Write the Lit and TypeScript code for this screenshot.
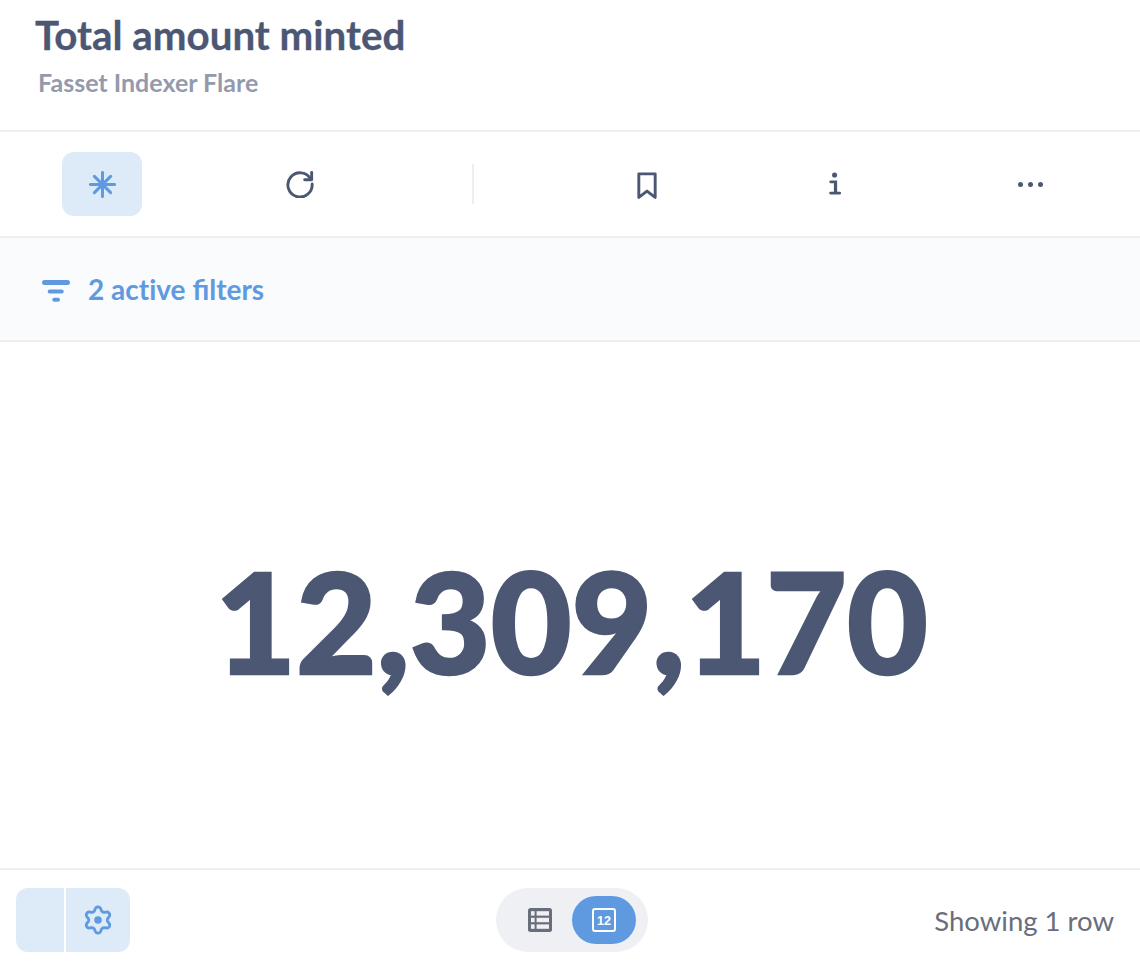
import { LitElement, html, css, svg } from "lit";
import { customElement } from "lit/decorators.js";

function cogPath(): string {
  const points: string[] = [];
  for (let i = 0; i < 72; i++) {
    const t = (i / 72) * Math.PI * 2;
    const wave = Math.cos(6 * t);
    const flattened = Math.sign(wave) * Math.pow(Math.abs(wave), 0.65);
    const r = 11.2 + 1.9 * flattened;
    points.push(`${(15 + r * Math.sin(t)).toFixed(2)} ${(15 - r * Math.cos(t)).toFixed(2)}`);
  }
  return `M${points.join("L")}Z`;
}

@customElement("app-root")
export class AppRoot extends LitElement {
  static styles = css`
    :host {
      display: flex;
      flex-direction: column;
      width: 1140px;
      height: 962px;
      background: #fff;
      color: #4c5773;
      font-family: Lato, sans-serif;
      overflow: hidden;
    }
    .header {
      height: 130px;
      box-sizing: border-box;
      padding: 12px 35px 0;
    }
    .title {
      font-size: 40.3px;
      font-weight: 700;
      line-height: 46px;
      -webkit-text-stroke: 0.3px currentColor;
    }
    .subtitle {
      font-size: 25px;
      font-weight: 700;
      line-height: 30px;
      color: #949aab;
      margin: 9px 0 0 3px;
    }
    .toolbar {
      height: 104px;
      border-top: 2px solid #eeeeef;
      border-bottom: 2px solid #eeeeef;
      display: flex;
      align-items: center;
      padding-left: 62px;
    }
    .btn {
      width: 80px;
      height: 64px;
      border-radius: 12px;
      display: flex;
      align-items: center;
      justify-content: center;
      flex: none;
    }
    .btn.active {
      background: #ddeaf7;
      color: #5f9ae0;
    }
    .refresh { margin-left: 118px; }
    .sep {
      width: 2px;
      height: 40px;
      background: #eeeeef;
      margin-left: 132px;
      flex: none;
    }
    .bookmark { margin-left: 133px; padding-top: 4px; box-sizing: border-box; }
    .info { margin-left: 108px; }
    .more { margin-left: 115px; }
    .filters {
      height: 104px;
      box-sizing: border-box;
      background: #f9fbfc;
      border-bottom: 2px solid #eeeeef;
      display: flex;
      align-items: center;
      gap: 18px;
      padding: 0 0 0 42px;
      color: #5f9ae0;
      font-size: 28px;
      font-weight: 700;
    }
    .filters svg { margin-top: 3px; }
    .noliga { font-variant-ligatures: none; }
    .main {
      flex: 1;
      display: flex;
      align-items: center;
      justify-content: center;
      padding: 32px 0 0 3px;
      box-sizing: border-box;
      font-size: 139.4px;
      font-weight: 900;
      line-height: 1;
      -webkit-text-stroke: 2.5px currentColor;
    }
    .footer {
      height: 94px;
      box-sizing: border-box;
      border-top: 2px solid #eeeeef;
      display: flex;
      align-items: center;
      padding: 8px 26px 0 16px;
    }
    .split {
      display: flex;
      gap: 2px;
      width: 114px;
      height: 64px;
      flex: none;
    }
    .split div {
      background: #ddeaf7;
      color: #5f9ae0;
      display: flex;
      align-items: center;
      justify-content: center;
    }
    .split .l { width: 48px; border-radius: 12px 0 0 12px; }
    .split .r { width: 64px; border-radius: 0 12px 12px 0; }
    .toggle {
      width: 152px;
      height: 64px;
      border-radius: 32px;
      background: #eef0f4;
      box-sizing: border-box;
      padding: 8px 12px;
      display: flex;
      justify-content: space-between;
      margin-left: 366px;
      flex: none;
    }
    .toggle div {
      width: 64px;
      height: 48px;
      border-radius: 24px;
      display: flex;
      align-items: center;
      justify-content: center;
      color: #696e7b;
    }
    .toggle .on {
      background: #5f9ae0;
      color: #fff;
    }
    .count {
      margin-left: auto;
      font-size: 27.5px;
      font-weight: 400;
      color: #696e7b;
    }
    svg { display: block; }
    .num { font: 700 12.5px "Liberation Sans", sans-serif; fill: currentColor; }
  `;

  render() {
    return html`
      <div class="header">
        <div class="title">Total amount minted</div>
        <div class="subtitle">Fasset Indexer Flare</div>
      </div>
      <div class="toolbar">
        <div class="btn active">
          <svg width="27" height="27" viewBox="0 0 28 28" fill="none" stroke="currentColor" stroke-width="3.1" stroke-linecap="round">
            <path d="M14 1.5v25M1.5 14h25M5.6 5.6l16.8 16.8M22.4 5.6 5.6 22.4" />
          </svg>
        </div>
        <div class="btn refresh">
          <svg width="28" height="28" viewBox="0 0 30 30" fill="none" stroke="#4c5773" stroke-width="3.1" stroke-linecap="round" stroke-linejoin="round">
            <path d="M26.6 10A13 13 0 1 0 28 15" />
            <path d="M20 10.5h7.5V2.5" />
          </svg>
        </div>
        <div class="sep"></div>
        <div class="btn bookmark">
          <svg width="20" height="27.3" viewBox="0 0 22 30" fill="none" stroke="#4c5773" stroke-width="3.2" stroke-linejoin="round">
            <path d="M2 2h18v26l-9-7-9 7z" />
          </svg>
        </div>
        <div class="btn info">
          <svg width="12" height="24" viewBox="0 0 14 28" fill="#4c5773">
            <circle cx="6.5" cy="3.5" r="3" />
            <path d="M2 10h7.5v13h3a1.6 1.6 0 0 1 0 3.2H1.8a1.6 1.6 0 0 1 0-3.2h3.9v-9.8H2a1.6 1.6 0 0 1 0-3.2z" />
          </svg>
        </div>
        <div class="btn more">
          <svg width="25" height="5" viewBox="0 0 25 5" fill="#4c5773">
            <circle cx="2.5" cy="2.5" r="2.5" /><circle cx="12.5" cy="2.5" r="2.5" /><circle cx="22.5" cy="2.5" r="2.5" />
          </svg>
        </div>
      </div>
      <div class="filters">
        <svg width="28" height="22" viewBox="0 0 28 22" fill="currentColor">
          <rect x="0" y="0" width="28" height="5" rx="2.5" />
          <rect x="5.7" y="9.5" width="16" height="4" rx="2" />
          <rect x="10.3" y="17.7" width="7.7" height="4" rx="2" />
        </svg>
        <span><span class="noliga">2 active</span> filters</span>
      </div>
      <div class="main">12,309,170</div>
      <div class="footer">
        <div class="split">
          <div class="l"></div>
          <div class="r">
            <svg width="30" height="30" viewBox="0 0 30 30" fill="none" stroke="currentColor" stroke-width="2.8" stroke-linejoin="round">
              ${svg`<path d=${cogPath()} />`}
              <circle cx="15" cy="15" r="3.8" fill="currentColor" stroke="none" />
            </svg>
          </div>
        </div>
        <div class="toggle">
          <div>
            <svg width="24" height="24" viewBox="0 0 24 24">
              <rect width="24" height="24" rx="2.5" fill="currentColor" />
              <g fill="#eef0f4">
                <rect x="3" y="3.2" width="3.6" height="4.4" /><rect x="8.6" y="3.2" width="12.4" height="4.4" />
                <rect x="3" y="9.8" width="3.6" height="4.4" /><rect x="8.6" y="9.8" width="12.4" height="4.4" />
                <rect x="3" y="16.4" width="3.6" height="4.4" /><rect x="8.6" y="16.4" width="12.4" height="4.4" />
              </g>
            </svg>
          </div>
          <div class="on">
            <svg width="24" height="24" viewBox="0 0 24 24">
              <rect x="1" y="1" width="22" height="22" rx="2" fill="none" stroke="currentColor" stroke-width="2" />
              <text x="12" y="16.5" text-anchor="middle" class="num">12</text>
            </svg>
          </div>
        </div>
        <div class="count">Showing 1 row</div>
      </div>
    `;
  }
}
